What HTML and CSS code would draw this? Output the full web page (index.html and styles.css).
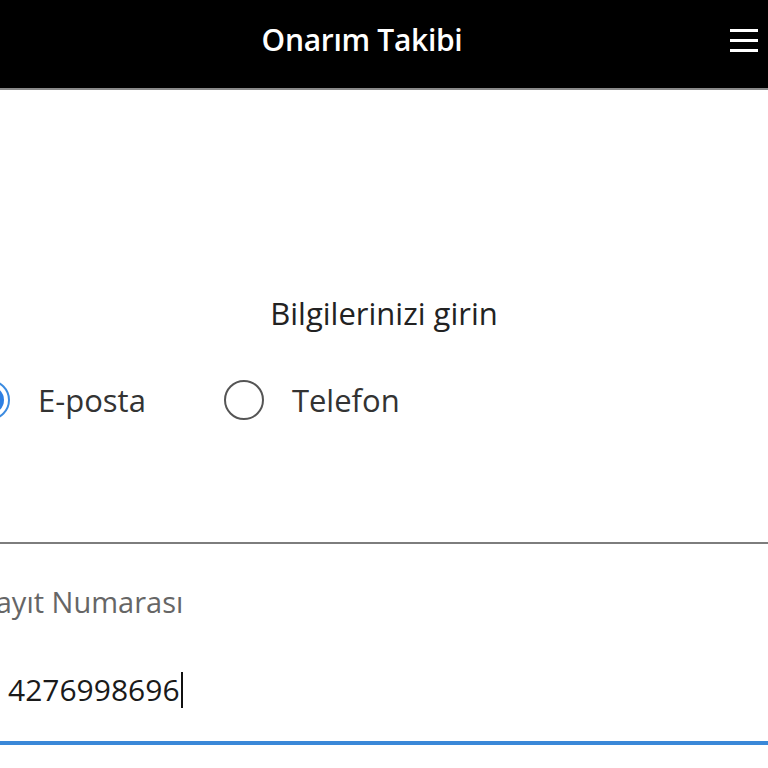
FILE: index.html
```html
<!DOCTYPE html>
<html lang="tr">
<head>
<meta charset="utf-8">
<title>Onarım Takibi</title>
<link rel="stylesheet" href="styles.css">
</head>
<body>
<header class="topbar">
  <span class="spacer"></span>
  <h1 class="title">Onarım Takibi</h1>
  <button class="menu" aria-label="Menü">
    <svg width="28" height="24" viewBox="0 0 28 24"><rect x="0" y="1" width="28" height="3" fill="#fff"/><rect x="0" y="11" width="28" height="3" fill="#fff"/><rect x="0" y="21" width="28" height="3" fill="#fff"/></svg>
  </button>
</header>
<main class="content">
  <h2 class="heading">Bilgilerinizi girin</h2>
  <div class="choices">
    <label class="choice"><span class="radio radio-on"><span class="dot"></span></span><span class="choice-text">E-posta</span></label>
    <label class="choice"><span class="radio"></span><span class="choice-text">Telefon</span></label>
  </div>
  <div class="field">
    <div class="field-label">Kayıt Numarası</div>
    <div class="field-value">4276998696<span class="caret"></span></div>
  </div>
</main>
</body>
</html>
```
FILE: styles.css
```css
html, body {
  margin: 0;
  padding: 0;
  background: #fff;
}
body {
  width: 768px;
  height: 768px;
  overflow: hidden;
  font-family: "Open Sans", "Noto Sans", sans-serif;
  color: #222;
}
.topbar {
  height: 88px;
  background: #000;
  border-bottom: 2px solid #8a8a8a;
  display: grid;
  grid-template-columns: 1fr auto 1fr;
  align-items: center;
}
.title {
  margin: 0 44px 8px 0;
  color: #fff;
  font-size: 30px;
  font-weight: 600;
  letter-spacing: -0.3px;
  line-height: 40px;
}
.menu {
  justify-self: end;
  margin-right: 10px;
  margin-bottom: 8px;
  background: none;
  border: 0;
  padding: 0;
  display: flex;
}
.content {
  display: flex;
  flex-direction: column;
}
.heading {
  margin: 203px 0 0;
  text-align: center;
  font-size: 31px;
  font-weight: 400;
  line-height: 40px;
  letter-spacing: 0;
  color: #222;
}
.choices {
  display: flex;
  align-items: center;
  gap: 78px;
  margin: 46px 0 0 -30px;
  height: 42px;
}
.choice {
  display: flex;
  align-items: center;
  gap: 28px;
}
.radio {
  width: 40px;
  height: 40px;
  box-sizing: border-box;
  border: 2px solid #555;
  border-radius: 50%;
  display: flex;
  align-items: center;
  justify-content: center;
}
.radio-on {
  border-color: #3c8be0;
}
.dot {
  width: 28px;
  height: 28px;
  border-radius: 50%;
  background: #2d7fe3;
}
.choice-text {
  font-size: 31px;
  line-height: 40px;
  letter-spacing: 0;
  color: #333;
}
.field {
  margin-top: 121px;
  border-top: 2px solid #7d7d7d;
  border-bottom: 4px solid #3a88d8;
  height: 203px;
  box-sizing: border-box;
}
.field-label {
  margin: 38px 0 0 -22px;
  font-size: 29px;
  line-height: 40px;
  letter-spacing: 0;
  color: #666;
}
.field-value {
  margin: 48px 0 0 8px;
  font-size: 30px;
  line-height: 40px;
  letter-spacing: 0;
  color: #1a1a1a;
  display: flex;
  align-items: center;
}
.caret {
  width: 2px;
  height: 36px;
  background: #111;
  margin-left: 1px;
}
```
